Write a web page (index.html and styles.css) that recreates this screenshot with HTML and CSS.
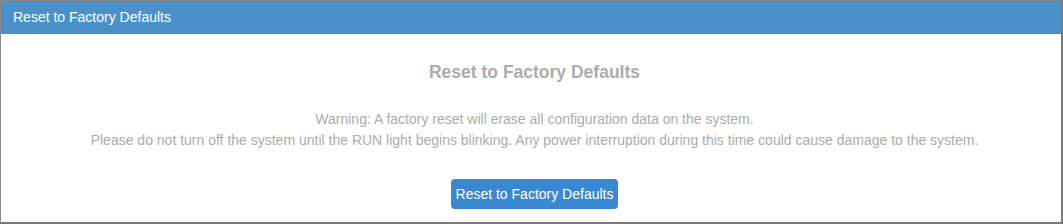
FILE: index.html
```html
<!DOCTYPE html>
<html>
  <head>
    <title>Reset to Factory Defaults</title>
    <link rel="stylesheet" href="styles.css">
  </head>
  <body>
    <div class="panel">
      <div class="panel-heading">Reset to Factory Defaults</div>
      <div class="panel-body">
        <h3>Reset to Factory Defaults</h3>
        <p class="warning">
          Warning: A factory reset will erase all configuration data on the system.<br>
          Please do not turn off the system until the RUN light begins blinking. Any power interruption during this time could cause damage to the system.
        </p>
        <button id="reset-button" class="btn">Reset to Factory Defaults</button>
      </div>
    </div>
  </body>
</html>
```
FILE: styles.css
```css
html, body {
  margin: 0;
  padding: 0;
}
body {
  font-family: "Liberation Sans", Arial, sans-serif;
  background-color: #ffffff;
}
.panel {
  height: 224px;
  box-sizing: border-box;
  border-top: 1px solid #8a8a8a;
  border-left: 1px solid #8a8a8a;
  border-right: 2px solid #7a7a7a;
  border-bottom: 2px solid #7a7a7a;
  background-color: white;
}
.panel-heading {
  background-color: #4a91c9;
  color: #ffffff;
  font-size: 14px;
  height: 33px;
  line-height: 33px;
  padding-left: 12px;
}
.panel-body {
  text-align: center;
  color: #acacac;
  padding-left: 7px;
}
.panel-body h3 {
  font-size: 17.5px;
  font-weight: bold;
  margin: 0;
  padding-top: 28px;
  line-height: 20px;
}
.warning {
  font-size: 14px;
  line-height: 21px;
  margin: 27px 0 0 0;
}
.btn {
  margin-top: 28px;
  font-family: "Liberation Sans", Arial, sans-serif;
  font-size: 14px;
  color: #ffffff;
  background-color: #3a88d0;
  border: none;
  border-radius: 4px;
  height: 30px;
  padding: 0 5px;
  cursor: pointer;
}
```
